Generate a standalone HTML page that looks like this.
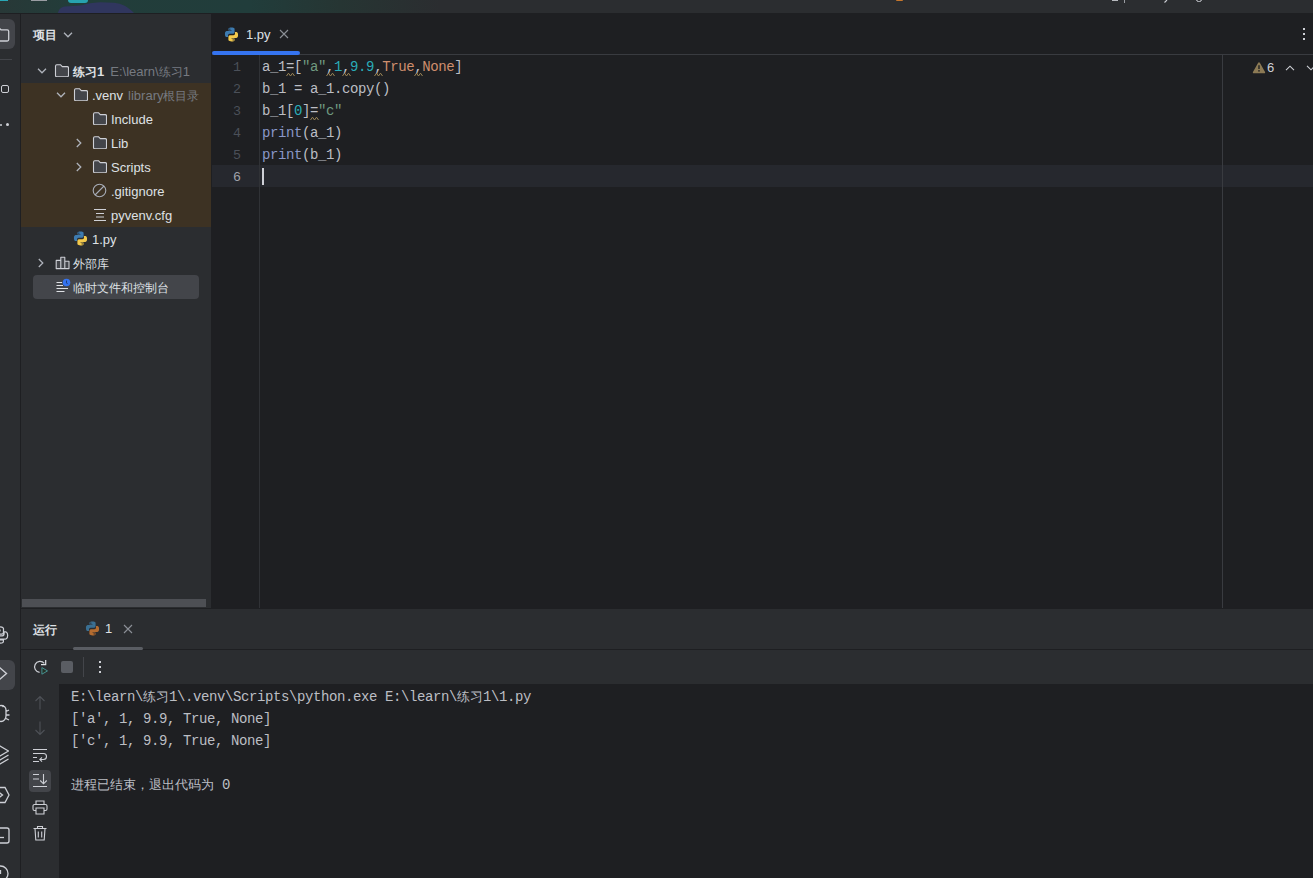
<!DOCTYPE html>
<html><head><meta charset="utf-8">
<style>
*{margin:0;padding:0;box-sizing:border-box}
html,body{width:1313px;height:878px;overflow:hidden;background:#1E1F22;font-family:"Liberation Sans",sans-serif;color:#DFE1E5}
body{position:relative}
.a{position:absolute}
.mono{position:absolute;font-family:"Liberation Mono",monospace;font-size:14px;letter-spacing:-0.4px;white-space:pre;line-height:22px;color:#BCBEC4}
.t{position:absolute;font-size:13px;line-height:24px;white-space:nowrap;color:#DFE1E5}
.gray{color:#767A81}
.ln{position:absolute;left:212px;width:29px;text-align:right;font-family:"Liberation Mono",monospace;font-size:13.33px;line-height:22px;color:#4B5059}
.s{color:#6F9A80}.n{color:#2AACB8}.k{color:#CF8E6D}.b{color:#8A97C8}
.cj{font-size:12px}
.cm{font-size:13px;letter-spacing:0}
.w{}
</style></head><body>

<div class="a" style="left:0;top:0;width:1313px;height:13px;background:linear-gradient(90deg,#283837 0px,#223D3A 80px,#213D3B 250px,#263533 340px,#2B2D30 440px)"></div>
<div class="a" style="left:0;top:0;width:8px;height:1px;background:#29A7B5"></div>
<div class="a" style="left:31px;top:0;width:16px;height:1px;background:#9A9DA3"></div>
<div class="a" style="left:68px;top:0;width:20px;height:3px;border-radius:0 0 5px 5px;background:#27A3AF"></div>
<svg class="a" style="left:56px;top:0" width="80" height="13" viewBox="0 0 80 13"><path d="M2 13C3 9 5 7 9 6.5L24 5.5C32 4 36 2.5 44 2.3L58 2.8C66 3.5 72 7 78 13z" fill="#30365E"/></svg>
<div class="a" style="left:896px;top:0;width:7px;height:1px;border-radius:0 0 3px 3px;background:#C6762C"></div>
<div class="a" style="left:1112px;top:0;width:6px;height:1px;background:#B8BABF"></div>
<div class="a" style="left:1124px;top:0;width:1px;height:3px;background:#9A9DA3"></div>
<svg class="a" style="left:1163px;top:0" width="5" height="3" viewBox="0 0 5 3"><path d="M4 0L1.5 2.5" stroke="#CED0D6" stroke-width="1.1"/></svg>
<div class="a" style="left:1196px;top:-3px;width:6px;height:5px;border:1.2px solid #CED0D6;border-radius:3px"></div>
<div class="a" style="left:0;top:13px;width:1313px;height:1px;background:#1E1F22"></div>
<div class="a" style="left:0;top:14px;width:20px;height:864px;background:#2B2D30"></div>
<div class="a" style="left:20px;top:14px;width:1px;height:864px;background:#1E1F22"></div>
<div class="a" style="left:-15px;top:19px;width:30px;height:30px;border-radius:6px;background:#43454A"></div>
<svg class="a" style="left:-8px;top:27px" width="18" height="15" viewBox="0 0 18 15"><path d="M1.5 2.5c0-1 .6-1.7 1.5-1.7h4l2 2h6.2c.9 0 1.5.6 1.5 1.5v8.2c0 .9-.6 1.5-1.5 1.5H3c-.9 0-1.5-.6-1.5-1.5z" fill="none" stroke="#CED0D6" stroke-width="1.3"/></svg>
<div class="a" style="left:0;top:59px;width:12px;height:1px;background:#43454A"></div>
<div class="a" style="left:1px;top:85px;width:8px;height:8px;border:1.4px solid #CED0D6;border-radius:2px"></div>
<div class="a" style="left:0px;top:124px;width:2px;height:2px;border-radius:1px;background:#CED0D6"></div>
<div class="a" style="left:6px;top:123px;width:3px;height:3px;border-radius:2px;background:#CED0D6"></div>
<svg class="a" style="left:-9px;top:626px" width="18" height="18" viewBox="0 0 16 16"><path d="M7.9 .8C4.8.8 5 2.1 5 2.1v1.6h3v.6H3.6S1.2 4 1.2 7.5s2 3.2 2 3.2h1.2V9s-.1-1.8 1.8-1.8h3.2s1.7 0 1.7-1.7V2.5S11.3.8 7.9.8z M8.1 15.2c3.1 0 2.9-1.3 2.9-1.3v-1.6H8v-.6h4.4s2.4.3 2.4-3.2-2-3.2-2-3.2h-1.2V7s.1 1.8-1.8 1.8H6.6s-1.7 0-1.7 1.7v3S4.7 15.2 8.1 15.2z" fill="none" stroke="#CED0D6" stroke-width="1.1"/></svg>
<div class="a" style="left:-15px;top:660px;width:30px;height:30px;border-radius:6px;background:#43454A"></div>
<svg class="a" style="left:-2px;top:666px" width="10" height="15" viewBox="0 0 10 15"><path d="M1 1l7.5 6.5L1 14" fill="none" stroke="#CED0D6" stroke-width="1.4"/></svg>
<svg class="a" style="left:-8px;top:702px" width="18" height="22" viewBox="0 0 18 22"><path d="M4 8c0-2.5 2-4.5 5-4.5s5 2 5 4.5v6c0 3-2.3 5.5-5 5.5s-5-2.5-5-5.5z M6 3.5l1.5 1.5 M12 3.5L10.5 5 M14 9.5l3-1.5 M14 13h3.5 M14 16.5l3 1.5" fill="none" stroke="#CED0D6" stroke-width="1.3"/></svg>
<svg class="a" style="left:-9px;top:745px" width="18" height="20" viewBox="0 0 18 20"><path d="M.5 6L9 1l8.5 5L9 11z M.5 10L9 15l8.5-5 M.5 14L9 19l8.5-5" fill="none" stroke="#CED0D6" stroke-width="1.3" stroke-linejoin="round"/></svg>
<svg class="a" style="left:-8px;top:786px" width="18" height="18" viewBox="0 0 18 18"><path d="M5 1.5h8l4 7.5-4 7.5H5L1 9z M6.5 6l4 3-4 3" fill="none" stroke="#CED0D6" stroke-width="1.3"/></svg>
<svg class="a" style="left:-8px;top:827px" width="18" height="17" viewBox="0 0 18 17"><rect x="1" y="1" width="16" height="15" rx="2" fill="none" stroke="#CED0D6" stroke-width="1.3"/><path d="M6 10.5h6" stroke="#CED0D6" stroke-width="1.3"/></svg>
<svg class="a" style="left:-8px;top:865px" width="18" height="18" viewBox="0 0 18 18"><circle cx="8.5" cy="8.5" r="7.5" fill="none" stroke="#CED0D6" stroke-width="1.3"/><path d="M8.5 5v4" stroke="#CED0D6" stroke-width="1.3"/></svg>
<div class="a" style="left:21px;top:14px;width:190px;height:594px;background:#2B2D30"></div>
<div class="t" style="left:33px;top:23px;font-weight:bold"><span class="cj">项目</span></div>
<svg class="a" style="left:63px;top:32px" width="10" height="6" viewBox="0 0 10 6"><path d="M1 .8l4 4 4-4" fill="none" stroke="#B0B4BC" stroke-width="1.25"/></svg>
<div class="a" style="left:21px;top:83px;width:190px;height:144px;background:#3D3223"></div>
<div class="a" style="left:33px;top:275px;width:166px;height:24px;border-radius:4px;background:#43454A"></div>
<svg class="a" style="left:37px;top:68px" width="10" height="6" viewBox="0 0 10 6"><path d="M1 .8l4 4 4-4" fill="none" stroke="#B0B4BC" stroke-width="1.25"/></svg>
<svg class="a" style="left:54px;top:64px" width="15" height="13" viewBox="0 0 15 13"><path d="M1.5 2.2c0-.9.5-1.5 1.3-1.5h3.6l1.9 1.9h4.9c.8 0 1.3.5 1.3 1.3v7.5c0 .8-.5 1.3-1.3 1.3H2.8c-.8 0-1.3-.5-1.3-1.3z" fill="#43454A" stroke="#CED0D6" stroke-width="1.1" stroke-linejoin="round"/></svg>
<div class="t" style="left:73px;top:60px"><b><span class="cj">练习</span>1</b><span class="gray" style="margin-left:6px">E:\learn\<span class="cj">练习</span>1</span></div>
<svg class="a" style="left:56px;top:92px" width="10" height="6" viewBox="0 0 10 6"><path d="M1 .8l4 4 4-4" fill="none" stroke="#B0B4BC" stroke-width="1.25"/></svg>
<svg class="a" style="left:73px;top:88px" width="15" height="13" viewBox="0 0 15 13"><path d="M1.5 2.2c0-.9.5-1.5 1.3-1.5h3.6l1.9 1.9h4.9c.8 0 1.3.5 1.3 1.3v7.5c0 .8-.5 1.3-1.3 1.3H2.8c-.8 0-1.3-.5-1.3-1.3z" fill="#43454A" stroke="#CED0D6" stroke-width="1.1" stroke-linejoin="round"/></svg>
<div class="t" style="left:92px;top:84px">.venv<span class="gray" style="margin-left:5px">library<span class="cj">根目录</span></span></div>
<svg class="a" style="left:92px;top:112px" width="15" height="13" viewBox="0 0 15 13"><path d="M1.5 2.2c0-.9.5-1.5 1.3-1.5h3.6l1.9 1.9h4.9c.8 0 1.3.5 1.3 1.3v7.5c0 .8-.5 1.3-1.3 1.3H2.8c-.8 0-1.3-.5-1.3-1.3z" fill="#43454A" stroke="#CED0D6" stroke-width="1.1" stroke-linejoin="round"/></svg>
<div class="t" style="left:111px;top:108px">Include</div>
<svg class="a" style="left:76px;top:138px" width="6" height="10" viewBox="0 0 6 10"><path d="M.8 1l4 4-4 4" fill="none" stroke="#B0B4BC" stroke-width="1.25"/></svg>
<svg class="a" style="left:92px;top:136px" width="15" height="13" viewBox="0 0 15 13"><path d="M1.5 2.2c0-.9.5-1.5 1.3-1.5h3.6l1.9 1.9h4.9c.8 0 1.3.5 1.3 1.3v7.5c0 .8-.5 1.3-1.3 1.3H2.8c-.8 0-1.3-.5-1.3-1.3z" fill="#43454A" stroke="#CED0D6" stroke-width="1.1" stroke-linejoin="round"/></svg>
<div class="t" style="left:111px;top:132px">Lib</div>
<svg class="a" style="left:76px;top:162px" width="6" height="10" viewBox="0 0 6 10"><path d="M.8 1l4 4-4 4" fill="none" stroke="#B0B4BC" stroke-width="1.25"/></svg>
<svg class="a" style="left:92px;top:160px" width="15" height="13" viewBox="0 0 15 13"><path d="M1.5 2.2c0-.9.5-1.5 1.3-1.5h3.6l1.9 1.9h4.9c.8 0 1.3.5 1.3 1.3v7.5c0 .8-.5 1.3-1.3 1.3H2.8c-.8 0-1.3-.5-1.3-1.3z" fill="#43454A" stroke="#CED0D6" stroke-width="1.1" stroke-linejoin="round"/></svg>
<div class="t" style="left:111px;top:156px">Scripts</div>
<svg class="a" style="left:92px;top:183px" width="15" height="15" viewBox="0 0 15 15"><circle cx="7.5" cy="7.5" r="6.3" fill="none" stroke="#A8ADB8" stroke-width="1.1"/><path d="M12 3L3 12" stroke="#A8ADB8" stroke-width="1.1"/></svg>
<div class="t" style="left:111px;top:180px">.gitignore</div>
<svg class="a" style="left:93px;top:208px" width="14" height="14" viewBox="0 0 14 14"><path d="M1 1.5h12 M3 5.5h8 M3 9h8 M1 12.5h12" stroke="#CED0D6" stroke-width="1.1"/></svg>
<div class="t" style="left:111px;top:204px">pyvenv.cfg</div>
<svg class="a" style="left:73px;top:231px" width="15" height="15" viewBox="0 0 16 16"><path d="M7.9 .6C4.6.6 4.8 2 4.8 2v1.7h3.2v.5H3.4S1 3.9 1 7.4s2 3.3 2 3.3h1.3V9s-.1-1.9 1.9-1.9h3.3s1.8 0 1.8-1.8V2.3S11.6.6 7.9.6z" fill="#3D7BB0"/><path d="M8.1 15.4c3.3 0 3.1-1.4 3.1-1.4v-1.7H8v-.5h4.6s2.4.3 2.4-3.2-2-3.3-2-3.3h-1.3V7s.1 1.9-1.9 1.9H6.5s-1.8 0-1.8 1.8v3S4.4 15.4 8.1 15.4z" fill="#F2C94C"/><circle cx="6.2" cy="2.2" r=".7" fill="#1E1F22"/><circle cx="9.8" cy="13.8" r=".7" fill="#1E1F22"/></svg>
<div class="t" style="left:92px;top:228px">1.py</div>
<svg class="a" style="left:38px;top:258px" width="6" height="10" viewBox="0 0 6 10"><path d="M.8 1l4 4-4 4" fill="none" stroke="#B0B4BC" stroke-width="1.25"/></svg>
<svg class="a" style="left:55px;top:256px" width="15" height="14" viewBox="0 0 15 14"><path d="M1.2 4.4h4.6v8.2H1.2z M5.8 1.2h4v11.4h-4z M9.8 5.2H14v7.4H9.8z" fill="#43454A" stroke="#CED0D6" stroke-width="1.1" stroke-linejoin="round"/></svg>
<div class="t" style="left:73px;top:252px"><span class="cj">外部库</span></div>
<svg class="a" style="left:56px;top:278px" width="16" height="16" viewBox="0 0 16 16"><path d="M.5 7.5h5.5 M.5 10.5h6.5 M.5 13.5h11.5 M.5 16.5h8" stroke="#DFE1E5" stroke-width="1.1" transform="translate(0,-3)"/><circle cx="10.5" cy="4.5" r="3.8" fill="#3574F0"/><path d="M10.5 2.5v2.4l1.2 1.2" stroke="#1E3A6E" stroke-width=".9" fill="none"/></svg>
<div class="t" style="left:73px;top:276px"><span class="cj">临时文件和控制台</span></div>
<div class="a" style="left:22px;top:599px;width:184px;height:8px;background:#4D4F54"></div>
<svg class="a" style="left:224px;top:27px" width="15" height="15" viewBox="0 0 16 16"><path d="M7.9 .6C4.6.6 4.8 2 4.8 2v1.7h3.2v.5H3.4S1 3.9 1 7.4s2 3.3 2 3.3h1.3V9s-.1-1.9 1.9-1.9h3.3s1.8 0 1.8-1.8V2.3S11.6.6 7.9.6z" fill="#3D7BB0"/><path d="M8.1 15.4c3.3 0 3.1-1.4 3.1-1.4v-1.7H8v-.5h4.6s2.4.3 2.4-3.2-2-3.3-2-3.3h-1.3V7s.1 1.9-1.9 1.9H6.5s-1.8 0-1.8 1.8v3S4.4 15.4 8.1 15.4z" fill="#F2C94C"/><circle cx="6.2" cy="2.2" r=".7" fill="#1E1F22"/><circle cx="9.8" cy="13.8" r=".7" fill="#1E1F22"/></svg>
<div class="a" style="left:246px;top:23px;font-size:13px;line-height:24px">1.py</div>
<svg class="a" style="left:279px;top:29px" width="10" height="10" viewBox="0 0 10 10"><path d="M1 1l8 8M9 1L1 9" stroke="#8C9097" stroke-width="1.1"/></svg>
<div class="a" style="left:1303px;top:28px;width:2px;height:2px;background:#CED0D6"></div><div class="a" style="left:1303px;top:33px;width:2px;height:2px;background:#CED0D6"></div><div class="a" style="left:1303px;top:38px;width:2px;height:2px;background:#CED0D6"></div>
<div class="a" style="left:212px;top:54px;width:1101px;height:1px;background:#393B40"></div>
<div class="a" style="left:212px;top:51px;width:88px;height:4px;border-radius:2px;background:#3574F0"></div>
<div class="a" style="left:212px;top:165px;width:1101px;height:22px;background:#26282E"></div>
<div class="a" style="left:259px;top:55px;width:1px;height:553px;background:#303236"></div>
<div class="a" style="left:1222px;top:55px;width:1px;height:553px;background:#393B40"></div>
<div class="ln" style="top:57px;color:#4B5059">1</div>
<div class="ln" style="top:79px;color:#4B5059">2</div>
<div class="ln" style="top:101px;color:#4B5059">3</div>
<div class="ln" style="top:123px;color:#4B5059">4</div>
<div class="ln" style="top:145px;color:#4B5059">5</div>
<div class="ln" style="top:167px;color:#A1A3AB">6</div>
<div class="mono" style="left:262px;top:56px">a_1<span class="w">=</span>[<span class="s">"a"</span><span class="w">,</span><span class="n">1</span><span class="w">,</span><span class="n">9.9</span><span class="w">,</span><span class="k">True</span><span class="w">,</span><span class="k">None</span>]</div>
<div class="mono" style="left:262px;top:78px">b_1 = a_1.copy()</div>
<div class="mono" style="left:262px;top:100px">b_1[<span class="n">0</span>]<span class="w">=</span><span class="s">"c"</span></div>
<div class="mono" style="left:262px;top:122px"><span class="b">print</span>(a_1)</div>
<div class="mono" style="left:262px;top:144px"><span class="b">print</span>(b_1)</div>
<div class="mono" style="left:262px;top:166px"></div>
<div class="a" style="left:262px;top:168px;width:2px;height:17px;background:#CED0D6"></div>
<svg class="a" style="left:286px;top:72px" width="9" height="5" viewBox="0 0 9 5"><path d="M.5 4L2.5 1.2 4.5 4 6.5 1.2 8.5 4" fill="none" stroke="#9C8656" stroke-width="1"/></svg>
<svg class="a" style="left:326px;top:72px" width="9" height="5" viewBox="0 0 9 5"><path d="M.5 4L2.5 1.2 4.5 4 6.5 1.2 8.5 4" fill="none" stroke="#9C8656" stroke-width="1"/></svg>
<svg class="a" style="left:342px;top:72px" width="9" height="5" viewBox="0 0 9 5"><path d="M.5 4L2.5 1.2 4.5 4 6.5 1.2 8.5 4" fill="none" stroke="#9C8656" stroke-width="1"/></svg>
<svg class="a" style="left:374px;top:72px" width="9" height="5" viewBox="0 0 9 5"><path d="M.5 4L2.5 1.2 4.5 4 6.5 1.2 8.5 4" fill="none" stroke="#9C8656" stroke-width="1"/></svg>
<svg class="a" style="left:414px;top:72px" width="9" height="5" viewBox="0 0 9 5"><path d="M.5 4L2.5 1.2 4.5 4 6.5 1.2 8.5 4" fill="none" stroke="#9C8656" stroke-width="1"/></svg>
<svg class="a" style="left:310px;top:116px" width="9" height="5" viewBox="0 0 9 5"><path d="M.5 4L2.5 1.2 4.5 4 6.5 1.2 8.5 4" fill="none" stroke="#9C8656" stroke-width="1"/></svg>
<svg class="a" style="left:1252px;top:61px" width="14" height="13" viewBox="-0.5 -0.5 15 14"><path d="M7 .8c.4 0 .7.2.9.5l5.6 10c.4.7-.1 1.4-.9 1.4H1.4c-.8 0-1.3-.7-.9-1.4l5.6-10c.2-.3.5-.5.9-.5z" fill="#8C7A55"/><path d="M7 4v4" stroke="#1E1F22" stroke-width="1.5"/><rect x="6.2" y="9.3" width="1.6" height="1.6" fill="#1E1F22"/></svg>
<div class="a" style="left:1267px;top:58px;font-size:13px;line-height:20px;color:#CED0D6">6</div>
<svg class="a" style="left:1285px;top:65px" width="10" height="6" viewBox="0 0 10 6"><path d="M1 5.2l4-4 4 4" fill="none" stroke="#CED0D6" stroke-width="1.1"/></svg>
<svg class="a" style="left:1306px;top:65px" width="10" height="6" viewBox="0 0 10 6"><path d="M1 .8l4 4 4-4" fill="none" stroke="#CED0D6" stroke-width="1.1"/></svg>
<div class="a" style="left:21px;top:608px;width:1292px;height:1px;background:#1E1F22"></div>
<div class="a" style="left:21px;top:609px;width:1292px;height:269px;background:#2B2D30"></div>
<div class="t" style="left:33px;top:618px;font-weight:bold"><span class="cj">运行</span></div>
<svg class="a" style="left:85px;top:621px" width="15" height="15" viewBox="0 0 16 16"><path d="M7.9 .6C4.6.6 4.8 2 4.8 2v1.7h3.2v.5H3.4S1 3.9 1 7.4s2 3.3 2 3.3h1.3V9s-.1-1.9 1.9-1.9h3.3s1.8 0 1.8-1.8V2.3S11.6.6 7.9.6z" fill="#3A6F92"/><path d="M8.1 15.4c3.3 0 3.1-1.4 3.1-1.4v-1.7H8v-.5h4.6s2.4.3 2.4-3.2-2-3.3-2-3.3h-1.3V7s.1 1.9-1.9 1.9H6.5s-1.8 0-1.8 1.8v3S4.4 15.4 8.1 15.4z" fill="#B46C30"/><circle cx="6.2" cy="2.2" r=".7" fill="#1E1F22"/><circle cx="9.8" cy="13.8" r=".7" fill="#1E1F22"/></svg>
<div class="t" style="left:105px;top:617px">1</div>
<svg class="a" style="left:123px;top:624px" width="10" height="10" viewBox="0 0 10 10"><path d="M1 1l8 8M9 1L1 9" stroke="#8C9097" stroke-width="1.1"/></svg>
<div class="a" style="left:21px;top:649px;width:1292px;height:1px;background:#1E1F22"></div>
<div class="a" style="left:73px;top:647px;width:70px;height:3px;border-radius:2px;background:#5A5D63"></div>
<svg class="a" style="left:30px;top:656px" width="22" height="22" viewBox="0 0 22 22"><path d="M14.3 7.4A5.5 5.5 0 1 0 9.6 16.4" fill="none" stroke="#CED0D6" stroke-width="1.2"/><path d="M11 8.6h4.7V4" fill="none" stroke="#DFE1E5" stroke-width="1.2"/><path d="M11.9 11.6v6.6l5.6-3.3z" fill="#263026" stroke="#4A9C9C" stroke-width="0.9" stroke-linejoin="round"/></svg>
<div class="a" style="left:61px;top:661px;width:12px;height:12px;border-radius:2px;background:#5A5D63"></div>
<div class="a" style="left:83px;top:657px;width:1px;height:20px;background:#43454A"></div>
<div class="a" style="left:99px;top:661px;width:2px;height:2px;background:#CED0D6"></div><div class="a" style="left:99px;top:666px;width:2px;height:2px;background:#CED0D6"></div><div class="a" style="left:99px;top:671px;width:2px;height:2px;background:#CED0D6"></div>
<div class="a" style="left:59px;top:684px;width:1254px;height:194px;background:#1E1F22"></div>
<svg class="a" style="left:34px;top:695px" width="12" height="15" viewBox="0 0 12 15"><path d="M6 1.5v13 M1.5 6l4.5-4.5 4.5 4.5" fill="none" stroke="#4E5157" stroke-width="1.1"/></svg>
<svg class="a" style="left:34px;top:721px" width="12" height="15" viewBox="0 0 12 15"><path d="M6 .5v13 M1.5 9l4.5 4.5 4.5-4.5" fill="none" stroke="#4E5157" stroke-width="1.1"/></svg>
<svg class="a" style="left:32px;top:748px" width="16" height="15" viewBox="0 0 16 15"><path d="M1 1.5h14 M1 5.5h10.5a3 3 0 0 1 0 6H8 M1 9.5h4 M1 13.5h6 M10 9.3l-2.2 2.2 2.2 2.2" fill="none" stroke="#CED0D6" stroke-width="1.1"/></svg>
<div class="a" style="left:29px;top:770px;width:22px;height:22px;border-radius:4px;background:#43454A"></div>
<svg class="a" style="left:32px;top:773px" width="16" height="15" viewBox="0 0 16 15"><path d="M1 1.5h6 M1 6h6 M1 13.5h14 M11.5 1v9.5 M8.2 7.5l3.3 3.3 3.3-3.3" fill="none" stroke="#CED0D6" stroke-width="1.1"/></svg>
<svg class="a" style="left:32px;top:800px" width="16" height="15" viewBox="0 0 16 15"><path d="M4 4.5V1h8v3.5 M4 10.5H2.5a1.5 1.5 0 0 1-1.5-1.5V6a1.5 1.5 0 0 1 1.5-1.5h11A1.5 1.5 0 0 1 15 6v3a1.5 1.5 0 0 1-1.5 1.5H12 M4 8h8v6H4z" fill="none" stroke="#CED0D6" stroke-width="1.1"/></svg>
<svg class="a" style="left:33px;top:825px" width="14" height="16" viewBox="0 0 14 16"><path d="M.5 3.5h13 M4.5 3.5V1.5h5v2 M2 3.5l.8 11.5h8.4L12 3.5 M5.3 6.5v6 M8.7 6.5v6" fill="none" stroke="#CED0D6" stroke-width="1.1"/></svg>
<div class="mono" style="left:71px;top:686px">E:\learn\<span class="cm">练习</span>1\.venv\Scripts\python.exe E:\learn\<span class="cm">练习</span>1\1.py</div>
<div class="mono" style="left:71px;top:708px">['a', 1, 9.9, True, None]</div>
<div class="mono" style="left:71px;top:730px">['c', 1, 9.9, True, None]</div>
<div class="mono" style="left:71px;top:752px"></div>
<div class="mono" style="left:71px;top:774px"><span class="cm">进程已结束，退出代码为</span> 0</div>
</body></html>
